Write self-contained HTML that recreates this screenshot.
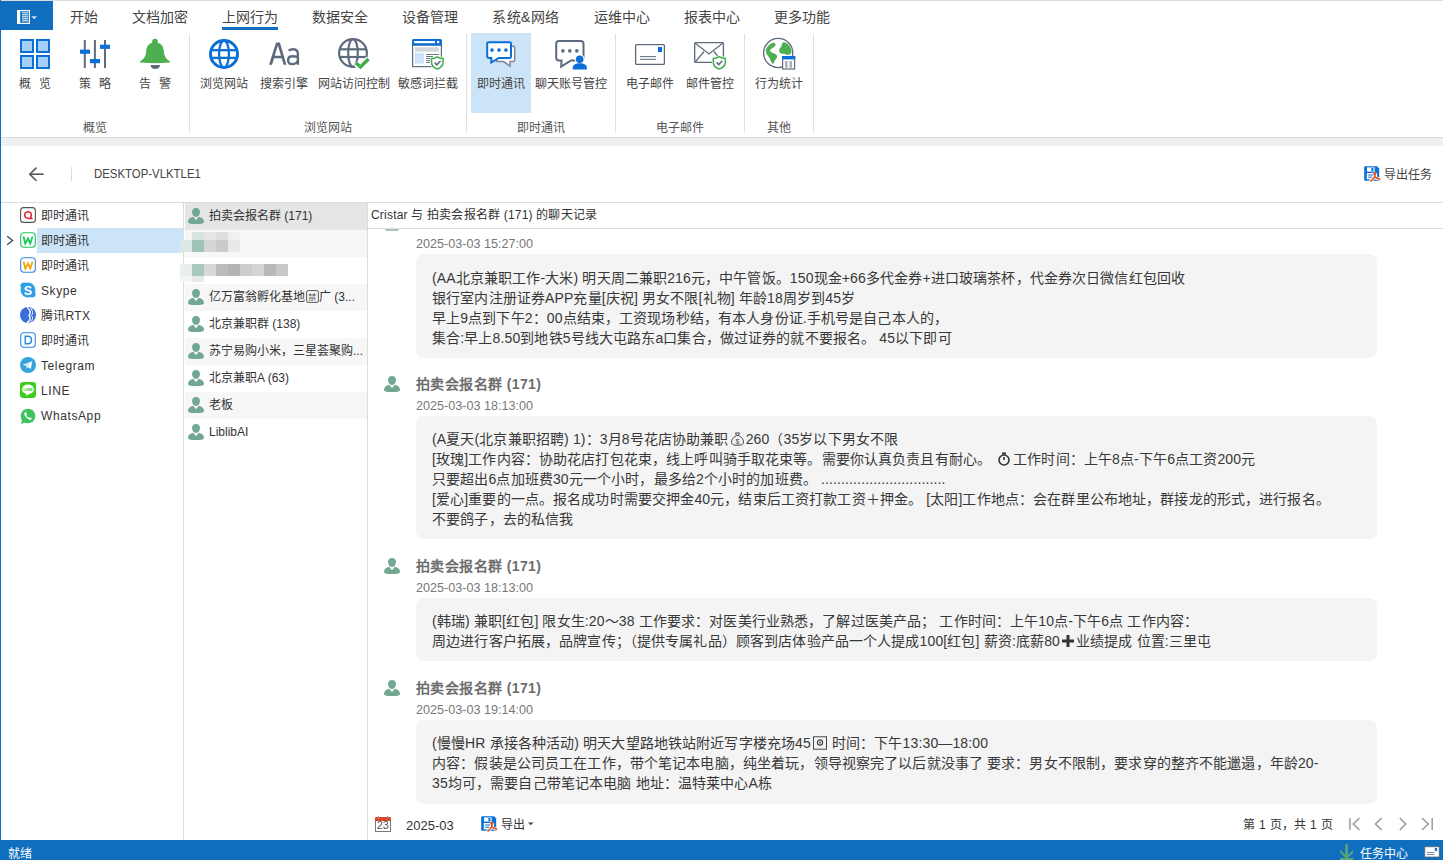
<!DOCTYPE html>
<html lang="zh-CN"><head><meta charset="utf-8">
<style>
*{margin:0;padding:0;box-sizing:border-box}
html,body{width:1443px;height:860px;overflow:hidden;background:#fff}
body{position:relative;font-family:"Liberation Sans",sans-serif;color:#333}
.a{position:absolute;white-space:nowrap}
.tab{position:absolute;top:7px;font-size:14px;line-height:20px;color:#444}
.lbl{position:absolute;top:74.5px;font-size:12px;line-height:18px;color:#444;text-align:center}
.glbl{position:absolute;top:118.5px;font-size:12px;line-height:18px;color:#555;text-align:center}
.sep{position:absolute;top:34px;width:1px;height:99px;background:#e1e1e1}
.ico{position:absolute}
.lrow{position:absolute;left:0;width:183px;height:25px}
.lrow .t{position:absolute;left:41px;top:4px;font-size:12px;line-height:18px;color:#333}
.mrow{position:absolute;left:185px;width:182px;height:27px}
.mrow .t{position:absolute;left:24px;top:4px;font-size:12px;line-height:18px;color:#333}
.name{position:absolute;left:416px;font-size:14px;font-weight:bold;color:#6e6e6e;line-height:20px;letter-spacing:0.4px}
.ts{position:absolute;left:416px;font-size:12.6px;color:#777;line-height:18px}
.bub{position:absolute;left:416px;width:961px;background:#f4f4f4;border-radius:8px}
.bub .ln{position:absolute;left:16px;font-size:14px;line-height:20px;color:#383838;white-space:nowrap;letter-spacing:0.13px}
</style></head><body>

<!-- top bar -->
<div class="a" style="left:0;top:0;width:1443px;height:1px;background:#dcdcdc"></div>
<div class="a" style="left:0;top:0;width:1px;height:860px;background:#106ebe"></div>
<div class="a" style="left:0;top:1px;width:53px;height:29px;background:#106ebe"></div>

<div class="tab" style="left:70px">开始</div>
<div class="tab" style="left:132px">文档加密</div>
<div class="tab" style="left:222px">上网行为</div>
<div class="a" style="left:222px;top:27px;width:56px;height:3px;background:#106ebe"></div>
<div class="tab" style="left:312px">数据安全</div>
<div class="tab" style="left:402px">设备管理</div>
<div class="tab" style="left:492px;letter-spacing:0.5px">系统&amp;网络</div>
<div class="tab" style="left:594px">运维中心</div>
<div class="tab" style="left:684px">报表中心</div>
<div class="tab" style="left:774px">更多功能</div>

<!-- ribbon -->
<div class="a" style="left:471px;top:33px;width:60px;height:80px;background:#cce4f7"></div>
<div class="sep" style="left:189px"></div>
<div class="sep" style="left:466px"></div>
<div class="sep" style="left:615px"></div>
<div class="sep" style="left:744px"></div>
<div class="sep" style="left:813px"></div>

<div class="lbl" style="left:19px">概<span style="margin-left:8px">览</span></div>
<div class="lbl" style="left:79px">策<span style="margin-left:8px">略</span></div>
<div class="lbl" style="left:139px">告<span style="margin-left:8px">警</span></div>
<div class="lbl" style="left:200px">浏览网站</div>
<div class="lbl" style="left:260px">搜索引擎</div>
<div class="lbl" style="left:318px">网站访问控制</div>
<div class="lbl" style="left:398px">敏感词拦截</div>
<div class="lbl" style="left:477px">即时通讯</div>
<div class="lbl" style="left:535px">聊天账号管控</div>
<div class="lbl" style="left:626px">电子邮件</div>
<div class="lbl" style="left:686px">邮件管控</div>
<div class="lbl" style="left:755px">行为统计</div>

<div class="glbl" style="left:83px">概览</div>
<div class="glbl" style="left:304px">浏览网站</div>
<div class="glbl" style="left:517px">即时通讯</div>
<div class="glbl" style="left:656px">电子邮件</div>
<div class="glbl" style="left:767px">其他</div>

<div class="a" style="left:1px;top:137px;width:1442px;height:1px;background:#dcdcdc"></div>
<div class="a" style="left:1px;top:138px;width:1442px;height:8px;background:#f0f0f0"></div>

<!-- header -->
<div class="a" style="left:71px;top:167px;width:1px;height:14px;background:#dcdcdc"></div>
<div class="a" style="left:94px;top:165px;font-size:13px;line-height:18px;color:#444;transform:scaleX(0.877);transform-origin:0 0">DESKTOP-VLKTLE1</div>
<div class="a" style="left:1384px;top:166px;font-size:12px;line-height:18px;color:#444">导出任务</div>
<div class="a" style="left:1px;top:202px;width:1442px;height:1px;background:#dcdcdc"></div>

<!-- left panel -->
<div class="lrow" style="top:203px"><div class="t">即时通讯</div></div>
<div class="lrow" style="top:228px"><div class="a" style="left:37px;top:0;width:146px;height:25px;background:#cce4f7"></div><div class="t">即时通讯</div></div>
<div class="lrow" style="top:253px"><div class="t">即时通讯</div></div>
<div class="lrow" style="top:278px"><div class="t" style="letter-spacing:0.6px">Skype</div></div>
<div class="lrow" style="top:303px"><div class="t" style="letter-spacing:0.3px">腾讯RTX</div></div>
<div class="lrow" style="top:328px"><div class="t">即时通讯</div></div>
<div class="lrow" style="top:353px"><div class="t" style="letter-spacing:0.6px">Telegram</div></div>
<div class="lrow" style="top:378px"><div class="t" style="letter-spacing:0.6px">LINE</div></div>
<div class="lrow" style="top:403px"><div class="t" style="letter-spacing:0.6px">WhatsApp</div></div>

<div class="a" style="left:183px;top:203px;width:1px;height:637px;background:#dcdcdc"></div>

<!-- middle panel -->
<div class="mrow" style="top:203px;background:#e5e5e5"><div class="t">拍卖会报名群 (171)</div></div>
<div class="mrow" style="top:230px;background:#f7f7f7"></div>
<div class="mrow" style="top:257px"></div>
<div class="mrow" style="top:284px;background:#f7f7f7"><div class="t">亿万富翁孵化基地<svg width="13" height="13" viewBox="0 0 13 13" style="vertical-align:-2px;margin:0 0.5px"><rect x="0.6" y="0.6" width="11.8" height="11.8" rx="1.5" fill="none" stroke="#555" stroke-width="1"/><text x="6.5" y="10" font-size="8.5" fill="#555" text-anchor="middle">禁</text></svg>广 (3...</div></div>
<div class="mrow" style="top:311px"><div class="t">北京兼职群 (138)</div></div>
<div class="mrow" style="top:338px;background:#f7f7f7"><div class="t">苏宁易购小米，三星荟聚购...</div></div>
<div class="mrow" style="top:365px"><div class="t">北京兼职A (63)</div></div>
<div class="mrow" style="top:392px;background:#f7f7f7"><div class="t">老板</div></div>
<div class="mrow" style="top:419px"><div class="t">LiblibAI</div></div>

<div class="a" style="left:367px;top:203px;width:1px;height:637px;background:#dcdcdc"></div>

<!-- chat -->
<div class="a" style="left:371px;top:206px;font-size:12px;line-height:18px;color:#333;letter-spacing:0.2px">Cristar 与 拍卖会报名群 (171) 的聊天记录</div>
<div class="a" style="left:368px;top:228px;width:1075px;height:1px;background:#dcdcdc"></div>

<div class="ts" style="top:235px">2025-03-03 15:27:00</div>
<div class="bub" style="top:254px;height:104px">
<div class="ln" style="top:14px">(AA北京兼职工作-大米) 明天周二兼职216元，中午管饭。150现金+66多代金券+进口玻璃茶杯，代金券次日微信红包回收</div>
<div class="ln" style="top:34px">银行室内注册证券APP充量[庆祝] 男女不限[礼物] 年龄18周岁到45岁</div>
<div class="ln" style="top:54px">早上9点到下午2：00点结束，工资现场秒结，有本人身份证.手机号是自己本人的，</div>
<div class="ln" style="top:74px">集合:早上8.50到地铁5号线大屯路东a口集合，做过证券的就不要报名。 45以下即可</div>
</div>

<div class="name" style="top:374px">拍卖会报名群 (171)</div>
<div class="ts" style="top:397px">2025-03-03 18:13:00</div>
<div class="bub" style="top:416px;height:123px">
<div class="ln" style="top:13px">(A夏天(北京兼职招聘) 1)：3月8号花店协助兼职<svg width="15" height="14" viewBox="0 0 15 14" style="vertical-align:-2px;margin:0 1px 0 1px"><g fill="none" stroke="#444" stroke-width="1"><path d="M5.5,1 L9.5,1 L8.5,3.5 L6.5,3.5 Z"/><path d="M6.5,3.5 C3,5 1.5,8 1.5,10 C1.5,12.5 3.5,13.3 7.5,13.3 C11.5,13.3 13.5,12.5 13.5,10 C13.5,8 12,5 8.5,3.5"/></g><text x="7.5" y="11.5" font-size="7" font-family="Liberation Sans" fill="#444" text-anchor="middle">$</text></svg>260（35岁以下男女不限</div>
<div class="ln" style="top:33px">[玫瑰]工作内容：协助花店打包花束，线上呼叫骑手取花束等。需要你认真负责且有耐心。 <svg width="16" height="14" viewBox="0 0 16 14" style="vertical-align:-2px;margin:0 1px"><g fill="none" stroke="#333" stroke-width="1.6"><circle cx="8" cy="8" r="5"/><line x1="8" y1="8" x2="8" y2="5"/></g><rect x="6" y="0.5" width="4" height="2" fill="#333"/></svg>工作时间：上午8点-下午6点工资200元</div>
<div class="ln" style="top:53px">只要超出6点加班费30元一个小时，最多给2个小时的加班费。 ...............................</div>
<div class="ln" style="top:73px">[爱心]重要的一点。报名成功时需要交押金40元，结束后工资打款工资＋押金。 [太阳]工作地点：会在群里公布地址，群接龙的形式，进行报名。</div>
<div class="ln" style="top:93px">不要鸽子，去的私信我</div>
</div>

<div class="name" style="top:556px">拍卖会报名群 (171)</div>
<div class="ts" style="top:579px">2025-03-03 18:13:00</div>
<div class="bub" style="top:598px;height:63px">
<div class="ln" style="top:13px">(韩瑞) 兼职[红包] 限女生:20～38 工作要求：对医美行业熟悉，了解过医美产品； 工作时间：上午10点-下午6点 工作内容：</div>
<div class="ln" style="top:33px">周边进行客户拓展，品牌宣传；（提供专属礼品）顾客到店体验产品一个人提成100[红包] 薪资:底薪80<svg width="16" height="14" viewBox="0 0 16 14" style="vertical-align:-2px"><path d="M6.5,1 L9.5,1 L9.5,5.5 L14,5.5 L14,8.5 L9.5,8.5 L9.5,13 L6.5,13 L6.5,8.5 L2,8.5 L2,5.5 L6.5,5.5 Z" fill="#333"/></svg>业绩提成 位置:三里屯</div>
</div>

<div class="name" style="top:678px">拍卖会报名群 (171)</div>
<div class="ts" style="top:701px">2025-03-03 19:14:00</div>
<div class="bub" style="top:720px;height:84px">
<div class="ln" style="top:13px">(慢慢HR 承接各种活动) 明天大望路地铁站附近写字楼充场45<svg width="16" height="14" viewBox="0 0 16 14" style="vertical-align:-2px;margin-left:1px"><rect x="1.5" y="0.8" width="13" height="12.4" fill="none" stroke="#444" stroke-width="1"/><circle cx="8" cy="6.5" r="2.6" fill="none" stroke="#444" stroke-width="1.2"/><circle cx="8" cy="6.5" r="0.9" fill="#444"/></svg> 时间：下午13:30—18:00</div>
<div class="ln" style="top:33px">内容：假装是公司员工在工作，带个笔记本电脑，纯坐着玩，领导视察完了以后就没事了 要求：男女不限制，要求穿的整齐不能邋遢，年龄20-</div>
<div class="ln" style="top:53px">35均可，需要自己带笔记本电脑 地址：温特莱中心A栋</div>
</div>

<!-- footer -->
<div class="a" style="left:406px;top:817px;font-size:13px;line-height:18px;color:#333">2025-03</div>
<div class="a" style="left:501px;top:816px;font-size:12px;line-height:18px;color:#333">导出</div>
<div class="a" style="left:1243px;top:816px;font-size:12px;line-height:18px;color:#333;letter-spacing:0.3px">第 1 页，共 1 页</div>

<!-- status bar -->
<div class="a" style="left:0;top:840px;width:1443px;height:20px;background:#106ebe"></div>
<div class="a" style="left:8px;top:845px;font-size:12px;line-height:18px;color:#fff">就绪</div>
<div class="a" style="left:1360px;top:845px;font-size:12px;line-height:18px;color:#fff">任务中心</div>


<!-- blurred rows -->
<div class="a" style="left:192px;top:232px;width:12px;height:8px;background:#d7e3df"></div>
<div class="a" style="left:204px;top:232px;width:12px;height:8px;background:#e6e5e3"></div>
<div class="a" style="left:216px;top:232px;width:12px;height:8px;background:#dedede"></div>
<div class="a" style="left:228px;top:232px;width:12px;height:8px;background:#f0f0f0"></div>
<div class="a" style="left:180px;top:240px;width:12px;height:12px;background:#dce8e6"></div>
<div class="a" style="left:192px;top:240px;width:12px;height:12px;background:#9fc4b5"></div>
<div class="a" style="left:204px;top:240px;width:12px;height:12px;background:#d8d6d4"></div>
<div class="a" style="left:216px;top:240px;width:12px;height:12px;background:#cbcbca"></div>
<div class="a" style="left:228px;top:240px;width:12px;height:12px;background:#e8e9ea"></div>
<div class="a" style="left:180px;top:264px;width:12px;height:12px;background:#e8efed"></div>
<div class="a" style="left:192px;top:264px;width:12px;height:12px;background:#a7c8bb"></div>
<div class="a" style="left:204px;top:264px;width:12px;height:12px;background:#d9d8d6"></div>
<div class="a" style="left:216px;top:264px;width:12px;height:12px;background:#bcbbba"></div>
<div class="a" style="left:228px;top:264px;width:12px;height:12px;background:#b5b4b3"></div>
<div class="a" style="left:240px;top:264px;width:12px;height:12px;background:#cbcccd"></div>
<div class="a" style="left:252px;top:264px;width:12px;height:12px;background:#d3d5d4"></div>
<div class="a" style="left:264px;top:264px;width:12px;height:12px;background:#bab9b8"></div>
<div class="a" style="left:276px;top:264px;width:12px;height:12px;background:#c8c8c8"></div>
<div class="a" style="left:180px;top:276px;width:12px;height:6px;background:#f3f5f4"></div>
<div class="a" style="left:192px;top:276px;width:12px;height:6px;background:#e3ebe8"></div>
<!-- avatar 1 sliver -->
<div class="a" style="left:385px;top:229px;width:14px;height:2px;background:#a9c9bd;border-radius:0 0 3px 3px"></div>
<svg class="a" style="left:0;top:0" width="1443" height="860" viewBox="0 0 1443 860">
<defs>
<g id="person">
 <path d="M8,0 C10.7,0 12,1.9 12,4.1 C12,6.7 10.3,8.9 8,8.9 C5.7,8.9 4,6.7 4,4.1 C4,1.9 5.3,0 8,0 Z"/>
 <path d="M5.3,8.7 L8,12.3 L10.7,8.7 C14,9.3 16,11.2 16,13.7 C16,15.3 14,16 8,16 C2,16 0,15.3 0,13.7 C0,11.2 2,9.3 5.3,8.7 Z"/>
</g>
</defs>
<!-- menu button doc icon -->
<g fill="none" stroke="#fff">
 <rect x="17.6" y="10.6" width="11.8" height="12.8" stroke-width="1.2"/>
</g>
<rect x="18" y="11" width="2.2" height="12" fill="#fff"/>
<g stroke="#fff" stroke-width="1">
 <line x1="22" y1="12.8" x2="28" y2="12.8"/><line x1="22" y1="14.8" x2="28" y2="14.8"/><line x1="22" y1="16.8" x2="28" y2="16.8"/><line x1="22" y1="18.8" x2="28" y2="18.8"/><line x1="22" y1="20.8" x2="28" y2="20.8"/>
</g>
<path d="M31.3,16.3 L37,16.3 L34.15,19.2 Z" fill="#cfe0f3"/>

<!-- grid icon -->
<g fill="#a5cffb" stroke="#0a6fd6" stroke-width="2">
 <rect x="21" y="40" width="12" height="12"/><rect x="37" y="40" width="12" height="12"/>
 <rect x="21" y="56" width="12" height="12"/><rect x="37" y="56" width="12" height="12"/>
</g>
<!-- sliders -->
<g stroke="#5e6a7d" stroke-width="2">
 <line x1="84.8" y1="40" x2="84.8" y2="68"/><line x1="94.9" y1="40" x2="94.9" y2="68"/><line x1="105" y1="40" x2="105" y2="68"/>
</g>
<g fill="#0a6fd6">
 <rect x="80" y="49.6" width="10" height="4.2"/><rect x="90" y="59" width="10" height="4.2"/><rect x="100" y="44.7" width="10" height="4.2"/>
</g>
<!-- bell -->
<circle cx="155" cy="41.6" r="2.8" fill="#4caf50"/>
<path d="M155,42.3 C149.8,42.3 146.3,46 146.2,51.5 C146,56 144,59 140.2,61.3 C139.6,61.8 140,62.5 141,62.6 Q155,63.8 169,62.6 C170,62.5 170.4,61.8 169.8,61.3 C166,59 164,56 163.8,51.5 C163.7,46 160.2,42.3 155,42.3 Z" fill="#4caf50"/>
<path d="M150.6,65 L160,65 C160,67.4 158,69 155.3,69 C152.6,69 150.6,67.4 150.6,65 Z" fill="#5e6a7d"/>

<!-- blue globe -->
<g fill="none" stroke="#0a6fd6">
 <circle cx="224" cy="54" r="13.5" stroke-width="3"/>
 <ellipse cx="224" cy="54" rx="4.9" ry="13.5" stroke-width="2.3"/>
 <line x1="211" y1="50.2" x2="237" y2="50.2" stroke-width="2.3"/>
 <line x1="211" y1="57.9" x2="237" y2="57.9" stroke-width="2.3"/>
</g>
<!-- Aa -->
<path d="M269,64.7 L276.1,42.6 L279.9,42.6 L286.4,64.7 L283.6,64.7 L281.7,58.2 L274.1,58.2 L272,64.7 Z M274.7,55.8 L281,55.8 L277.9,45.6 Z" fill="#5e6a7d" fill-rule="evenodd"/>
<g fill="none" stroke="#5e6a7d" stroke-width="2.4"><path d="M288.6,50.6 C289.8,49.7 291.4,49.3 293.2,49.3 C296.5,49.3 297.9,51.1 297.9,54.2 L297.9,64.8"/><path d="M297.9,57.2 C296,56.5 294.2,56.3 292.6,56.3 C289.6,56.3 288.1,57.9 288.1,60.3 C288.1,62.8 289.9,64.1 292.1,64.1 C294.6,64.1 296.8,62.9 297.9,61"/></g>
<!-- gray globe + check -->
<g fill="none" stroke="#5e6a7d" stroke-width="2.2">
 <circle cx="353" cy="53" r="13.9"/>
 <ellipse cx="353" cy="53" rx="4.8" ry="13.9"/>
 <line x1="340" y1="49.3" x2="366" y2="49.3"/>
 <line x1="340" y1="57" x2="366" y2="57"/>
</g>
<polyline points="356,63 360.5,67 368.5,59" fill="none" stroke="#fff" stroke-width="6.5"/>
<polyline points="356,63 360.5,67 368.5,59" fill="none" stroke="#3fae49" stroke-width="3.4"/>

<!-- browser + shield -->
<rect x="412.6" y="45" width="28.8" height="21.6" fill="#fff" stroke="#5e6a7d" stroke-width="1.2"/>
<path d="M412,45.5 L412,40.5 Q412,39 413.5,39 L440.5,39 Q442,39 442,40.5 L442,45.5 Z" fill="#0a6fd6"/>
<rect x="414" y="41" width="21" height="2.2" fill="#fff"/>
<rect x="437" y="41" width="2.2" height="2.2" fill="#fff"/>
<rect x="415" y="47.2" width="24" height="4.6" rx="1" fill="#d3d7de"/>
<rect x="415" y="53" width="9" height="10.6" fill="#cde4fb"/>
<g stroke="#6b7686" stroke-width="1">
 <line x1="426" y1="54.5" x2="439" y2="54.5"/><line x1="426" y1="56.5" x2="433" y2="56.5"/><line x1="426" y1="58.5" x2="430" y2="58.5"/><line x1="426" y1="60.5" x2="430" y2="60.5"/><line x1="426" y1="62.5" x2="430" y2="62.5"/>
</g>
<path d="M437.3,56.8 C435.2,58.2 433.2,58.6 431.5,58.6 L431.5,62 C431.5,65.4 434,67.9 437.3,69 C440.6,67.9 443.1,65.4 443.1,62 L443.1,58.6 C441.4,58.6 439.4,58.2 437.3,56.8 Z" fill="#fff" stroke="#fff" stroke-width="3"/>
<path d="M437.3,56.8 C435.2,58.2 433.2,58.6 431.5,58.6 L431.5,62 C431.5,65.4 434,67.9 437.3,69 C440.6,67.9 443.1,65.4 443.1,62 L443.1,58.6 C441.4,58.6 439.4,58.2 437.3,56.8 Z" fill="#fff" stroke="#3fae49" stroke-width="1.5"/>
<polyline points="434.6,62.4 436.8,64.8 440.6,60.9" fill="none" stroke="#5e6a7d" stroke-width="1.5"/>

<!-- chat icon 1 -->
<path d="M497,46.2 L513,46.2 Q514.7,46.2 514.7,48 L514.7,60 Q514.7,61.6 513,61.6 L510,61.6 L510,66 L503.5,61.6 L497,61.6 Z" fill="#fff" stroke="#7d8797" stroke-width="1.5"/>
<path d="M489,42.2 L509.8,42.2 Q511,42.2 511,43.6 L511,56.6 Q511,58 509.8,58 L498.8,58 L491.3,62.5 L491.3,58 L489,58 Q487.2,58 487.2,56.6 L487.2,43.6 Q487.2,42.2 489,42.2 Z" fill="#fff" stroke="#0a6fd6" stroke-width="2"/>
<g fill="#0a6fd6"><circle cx="492" cy="50.1" r="1.8"/><circle cx="499" cy="50.1" r="1.8"/><circle cx="505.9" cy="50.1" r="1.8"/></g>

<!-- chat icon 2 -->
<path d="M559,41.1 L580.5,41.1 Q583.5,41.1 583.5,44 L583.5,57.6 Q583.5,60.5 580.5,60.5 L571,60.5 L561.2,66.6 L561.5,60.5 L559,60.5 Q556.2,60.5 556.2,57.6 L556.2,44 Q556.2,41.1 559,41.1 Z" fill="#fff" stroke="#5e6a7d" stroke-width="2"/>
<g fill="#5e6a7d"><circle cx="562.9" cy="50.9" r="1.8"/><circle cx="569.8" cy="50.9" r="1.8"/><circle cx="576.8" cy="50.9" r="1.8"/></g>
<g fill="#fff" stroke="#fff" stroke-width="2.4">
 <path d="M572.8,69.6 L572.8,67.6 C572.8,64.8 575.5,63.2 579.8,63.2 C584,63.2 586.8,64.8 586.8,67.6 L586.8,69.6 Z"/>
 <circle cx="579.7" cy="59.2" r="3.8"/>
</g>
<g fill="#0a6fd6">
 <path d="M572.8,69.6 L572.8,67.6 C572.8,64.8 575.5,63.2 579.8,63.2 C584,63.2 586.8,64.8 586.8,67.6 L586.8,69.6 Z"/>
 <circle cx="579.7" cy="59.2" r="3.8"/>
</g>

<!-- envelope 1 -->
<rect x="635.6" y="44.6" width="28.8" height="19.8" rx="1" fill="#fff" stroke="#5e6a7d" stroke-width="1.3"/>
<rect x="658" y="47" width="4" height="5" fill="#0a6fd6"/>
<g stroke="#5e6a7d" stroke-width="1"><line x1="640" y1="56.6" x2="656" y2="56.6"/><line x1="640" y1="59.3" x2="656" y2="59.3"/></g>
<!-- envelope 2 -->
<rect x="694.7" y="42.6" width="28.7" height="19.8" rx="1" fill="#fff" stroke="#5e6a7d" stroke-width="1.3"/>
<polyline points="695,43 709,54 723,43" fill="none" stroke="#5e6a7d" stroke-width="1.2"/>
<line x1="695.3" y1="62" x2="704" y2="51.5" stroke="#5e6a7d" stroke-width="1.2"/>
<line x1="722.7" y1="62" x2="714" y2="51.5" stroke="#5e6a7d" stroke-width="1.2"/>
<path d="M719.3,56.6 C717.2,58 715.2,58.4 713.3,58.4 L713.3,62 C713.3,65.4 715.8,67.9 719.3,69 C722.8,67.9 725.3,65.4 725.3,62 L725.3,58.4 C723.4,58.4 721.4,58 719.3,56.6 Z" fill="#fff" stroke="#fff" stroke-width="3"/>
<path d="M719.3,56.6 C717.2,58 715.2,58.4 713.3,58.4 L713.3,62 C713.3,65.4 715.8,67.9 719.3,69 C722.8,67.9 725.3,65.4 725.3,62 L725.3,58.4 C723.4,58.4 721.4,58 719.3,56.6 Z" fill="#fff" stroke="#3fae49" stroke-width="1.5"/>
<polyline points="716.5,62.2 718.7,64.6 722.4,60.8" fill="none" stroke="#5e6a7d" stroke-width="1.5"/>

<!-- globe stats -->
<circle cx="778.2" cy="53" r="14.6" fill="#fff" stroke="#5e6a7d" stroke-width="1.3"/>
<path d="M772.5,43 C774.5,42.5 776,43.5 775.5,45.5 C774,47.5 771,48.5 769.8,50.3 C770.5,52.5 773,53 775.5,54 C777.5,55 777.5,57.5 776,59 C774.5,60.5 774,62.5 773,64.3 C771.5,63 770.5,60 769.5,58 C768,55.5 765.8,54 765.8,51 C766,47.5 769,44.2 772.5,43 Z" fill="#4caf50"/>
<path d="M784,42 C788.5,43.5 791.4,47.5 791.5,51.5 C791.5,53.5 790,54.8 788,54.8 C786,54.8 785.5,53.5 783,53.8 C780.5,54 779,52.5 779,50.5 C779,48.5 781,47.5 781.5,46 C782,44 782,42.8 784,42 Z" fill="#4caf50"/>
<rect x="782.6" y="56.6" width="12" height="12.4" fill="#fff" stroke="#5e6a7d" stroke-width="1.2"/>
<rect x="782" y="56" width="13.2" height="3.4" fill="#0a6fd6"/>
<rect x="785" y="61" width="2.6" height="6.8" fill="#aab2bd"/><rect x="789.4" y="61" width="2.6" height="6.8" fill="#aab2bd"/>

<polyline points="7.2,236.2 12.6,240.5 7.2,244.8" fill="none" stroke="#444" stroke-width="1.3"/>
<!-- back arrow -->
<g fill="none" stroke="#555" stroke-width="1.6">
 <line x1="30" y1="174.2" x2="43.6" y2="174.2"/>
 <polyline points="36.5,167.6 29.8,174.2 36.5,180.8"/>
</g>

<!-- export icon header -->
<g id="exp" transform="translate(1364,166)">
 <path d="M0.2,1.2 Q0.2,0.2 1.2,0.2 L13,0.2 L15.2,2.4 L15.2,13.8 Q15.2,14.8 14.2,14.8 L1.2,14.8 Q0.2,14.8 0.2,13.8 Z" fill="#0a6fd6"/>
 <rect x="3" y="1.4" width="7.6" height="4.2" fill="#fff"/>
 <rect x="7.4" y="1.9" width="2" height="3.2" fill="#0a6fd6"/>
 <rect x="2.8" y="7" width="10.2" height="6.4" fill="#fff"/>
 <g stroke="#0a6fd6" stroke-width="1"><line x1="4.2" y1="9" x2="9.5" y2="9"/><line x1="4.2" y1="11.2" x2="8.5" y2="11.2"/></g>
 <g stroke="#fff" stroke-width="3" fill="none" stroke-linecap="round" stroke-linejoin="round"><path d="M10.8,7 L10.8,11 L7,15"/><path d="M10.8,11 L15.6,13.3"/></g>
 <g stroke="#e0521e" stroke-width="1.7" fill="none" stroke-linecap="round" stroke-linejoin="round"><path d="M10.8,7 L10.8,11 L7,15"/><path d="M10.8,11 L15.6,13.3"/></g>
 <circle cx="10.8" cy="7.2" r="1.5" fill="#e0521e"/>
</g>
<use href="#exp" x="-883" y="650"/>

<!-- calendar footer -->
<g transform="translate(375,816)">
 <rect x="0.5" y="2.5" width="15" height="13" fill="#fff" stroke="#777" stroke-width="1"/>
 <path d="M0,5 L0,2.3 Q0,1 1.3,1 L14.7,1 Q16,1 16,2.3 L16,5 Z" fill="#d9472b"/>
 <rect x="2.8" y="0" width="1.2" height="3" fill="#999"/><rect x="12" y="0" width="1.2" height="3" fill="#999"/>
 <text x="7.8" y="13.4" font-family="Liberation Sans" font-size="10.5" fill="#555" text-anchor="middle" textLength="12" lengthAdjust="spacingAndGlyphs">23</text>
</g>
<!-- export dropdown -->
<path d="M528,822.5 L533.5,822.5 L530.75,825.3 Z" fill="#444"/>

<!-- nav icons -->
<g fill="none" stroke="#9a9a9a" stroke-width="1.5">
 <line x1="1350" y1="818" x2="1350" y2="830"/><polyline points="1359.5,818 1353.3,824 1359.5,830"/>
 <polyline points="1381.5,818 1375.5,824 1381.5,830"/>
 <polyline points="1399.8,818 1405.8,824 1399.8,830"/>
 <polyline points="1422,818 1428.2,824 1422,830"/><line x1="1432.2" y1="818" x2="1432.2" y2="830"/>
</g>

<!-- status icons -->
<g fill="#5aa57a">
 <rect x="1345.3" y="844.2" width="2.6" height="13"/>
 <path d="M1340,849.5 L1346.6,856.5 L1353.2,849.5 L1353.2,852.5 L1346.6,859 L1340,852.5 Z"/>
 <rect x="1340" y="858" width="13.2" height="2"/>
</g>
<rect x="1424.8" y="846.8" width="14.4" height="10.2" fill="#fff" stroke="#5e6a7d" stroke-width="0.8"/>
<rect x="1434.8" y="848" width="2.3" height="3" fill="#0a6fd6"/>
<g stroke="#5e6a7d" stroke-width="0.8"><line x1="1427" y1="852.5" x2="1434.5" y2="852.5"/><line x1="1427" y1="854.5" x2="1434.5" y2="854.5"/></g>

<!-- left panel icons -->
<g transform="translate(20,207)">
 <rect x="0.6" y="0.6" width="14.8" height="14.8" rx="3" fill="#fff" stroke="#555" stroke-width="1.1"/>
 <path d="M8,4.6 L10.6,5.6 L11.4,8 L10.6,10.4 L12,11.6 L8,11.4 L5.4,10.4 L4.6,8 L5.4,5.6 Z" fill="none" stroke="#e3202b" stroke-width="1.5" stroke-linejoin="round"/>
</g>
<g transform="translate(20,232)">
 <rect x="0.7" y="0.7" width="14.6" height="14.6" rx="3" fill="#fff" stroke="#1fc45a" stroke-width="1.1"/>
 <path d="M3.5,4.5 L5.3,11.5 L8,6.5 L10.3,11.5 L12.5,4.5" fill="none" stroke="#1fc45a" stroke-width="1.8"/>
</g>
<g transform="translate(20,257)">
 <rect x="0.7" y="0.7" width="14.6" height="14.6" rx="3" fill="#fff" stroke="#2f8ae8" stroke-width="1.1"/>
 <path d="M3.5,4.5 L5.3,11.5 L8,6.5 L10.3,11.5 L12.5,4.5" fill="none" stroke="#f5a50a" stroke-width="1.8"/>
</g>
<g transform="translate(20,282)">
 <circle cx="8" cy="8" r="7.4" fill="#2d9fe6"/>
 <circle cx="4" cy="4" r="3.6" fill="#2d9fe6"/><circle cx="12" cy="12" r="3.6" fill="#2d9fe6"/>
 <text x="8" y="12.6" font-family="Liberation Sans" font-weight="bold" font-size="12.5" fill="#fff" text-anchor="middle">S</text>
</g>
<g transform="translate(20,307)">
 <circle cx="8" cy="8" r="8" fill="#3a6fd8"/>
 <path d="M7,0.3 C10.5,3 11,6 9,8.5 C11,11 10.5,13.5 7,15.7" fill="none" stroke="#fff" stroke-width="1.4"/>
 <path d="M10.5,0.8 C13,4 13,7 11.5,8.5 C13,10 13,12.5 10.5,15.2" fill="none" stroke="#fff" stroke-width="1"/>
</g>
<g transform="translate(20,332)">
 <rect x="0.7" y="0.7" width="14.6" height="14.6" rx="3" fill="#fff" stroke="#2f8ae8" stroke-width="1.1"/>
 <path d="M5.3,4.2 L7.8,4.2 C10.5,4.2 11.5,6 11.5,8 C11.5,10 10.5,11.8 7.8,11.8 L5.3,11.8 Z" fill="none" stroke="#2f8ae8" stroke-width="1.5"/>
</g>
<g transform="translate(20,357)">
 <circle cx="8" cy="8" r="8" fill="#35a3dc"/>
 <path d="M3,7.8 L12.2,4.2 L10.8,12 L7.8,10 L6.6,11.8 L6.4,9.2 L11,5.6 L5.8,8.8 Z" fill="#fff"/>
</g>
<g transform="translate(20,382)">
 <rect x="0" y="0" width="16" height="16" rx="3.2" fill="#3ccd1c"/>
 <ellipse cx="8" cy="7.4" rx="6" ry="4.8" fill="#fff"/>
 <path d="M6,11 L6.5,14 L9.5,11.5 Z" fill="#fff"/>
 <text x="8" y="9" font-family="Liberation Sans" font-weight="bold" font-size="4.2" fill="#3ccd1c" text-anchor="middle">LINE</text>
</g>
<g transform="translate(20,408)">
 <circle cx="8" cy="8" r="7.3" fill="#3ec160"/>
 <path d="M1,16 L2.2,11.5 L5,14.5 Z" fill="#3ec160"/>
 <path d="M5,4.2 C4,5 4,6.5 5.5,8.5 C7,10.5 9,12 10.3,11.8 C11.2,11.6 11.8,11 11.8,10.4 L10,9.2 L9,10 C8,9.5 6.8,8.3 6.2,7.2 L7,6.2 L6,4.2 Z" fill="#fff"/>
</g>

<!-- middle panel person icons -->
<g fill="#72a792">
 <use href="#person" x="188" y="208"/>
 <use href="#person" x="188" y="289"/>
 <use href="#person" x="188" y="316"/>
 <use href="#person" x="188" y="343"/>
 <use href="#person" x="188" y="370"/>
 <use href="#person" x="188" y="397"/>
 <use href="#person" x="188" y="424"/>
 <use href="#person" x="384" y="376"/>
 <use href="#person" x="384" y="558"/>
 <use href="#person" x="384" y="680"/>
</g>
</svg>

</body></html>
